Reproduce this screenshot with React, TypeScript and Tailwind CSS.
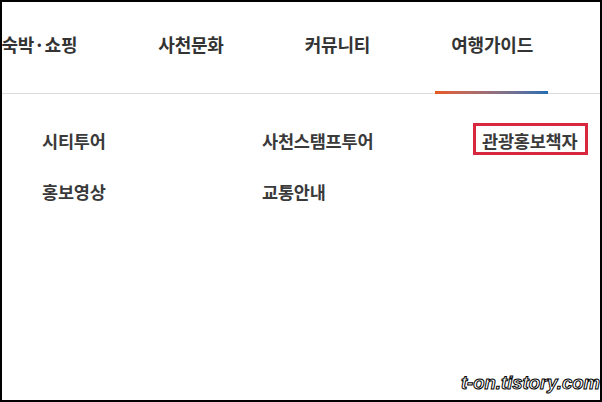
import React from "react";

const navItems = ["숙박·쇼핑", "사천문화", "커뮤니티", "여행가이드"];
const subItems = ["시티투어", "사천스탬프투어", "관광홍보책자", "홍보영상", "교통안내"];

export default function App() {
  return (
    <div
      className="relative w-[602px] h-[402px] overflow-hidden border-2 border-black bg-white text-[#333]"
      style={{ fontFamily: '"Noto Sans CJK KR", "Noto Sans", sans-serif' }}
    >
      {/* 상단 메뉴 */}
      <header className="flex h-[92px] justify-end gap-[50px] border-b border-[#dcdcdc] pr-[52px]">
        {navItems.map((item, i) => (
          <div key={item} className="relative flex shrink-0 items-center pl-4 pr-[15px] pb-[7px] text-[18px] font-bold tracking-[-0.2px]">
            {item}
            {i === navItems.length - 1 && (
              <span className="absolute bottom-[-1px] left-0 right-0 h-[3px] bg-gradient-to-r from-[#e9571b] to-[#1c6cb3]" />
            )}
          </div>
        ))}
      </header>

      {/* 하위 메뉴 */}
      <ul className="mt-[34px] grid grid-cols-[220px_220px_220px] gap-y-[26px] pl-[40px]">
        {subItems.map((item) => (
          <li key={item} className="relative text-[17.5px] leading-[25px] font-bold tracking-[-0.2px] text-[#3a3a3a]">
            <span className="relative">
              {item}
              {item === "관광홍보책자" && (
                <span className="absolute -left-[9px] -top-[5px] h-[32px] w-[115px] border-[3px] border-[#d72840]" />
              )}
            </span>
          </li>
        ))}
      </ul>

      <div
        className="absolute right-0 bottom-[3px] text-[18.5px] font-bold italic text-white [-webkit-text-stroke:1px_#000]"
        style={{ fontFamily: '"Liberation Sans", sans-serif' }}
      >
        t-on.tistory.com
      </div>
    </div>
  );
}
